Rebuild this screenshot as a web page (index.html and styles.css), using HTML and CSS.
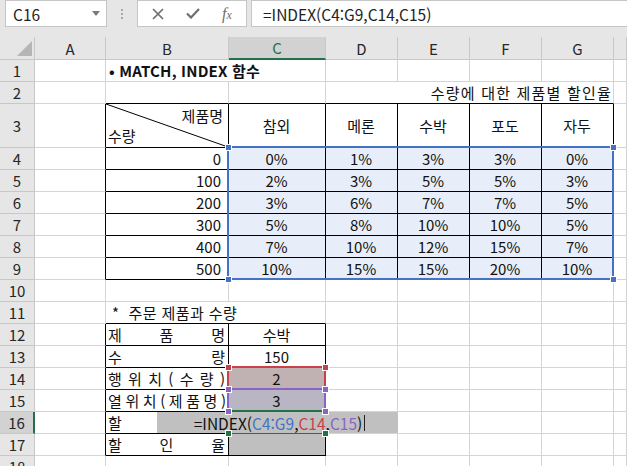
FILE: index.html
```html
<!DOCTYPE html>
<html lang="ko">
<head>
    <meta charset="UTF-8">
    <title>MATCH, INDEX 함수</title>
    <link rel="stylesheet" href="styles.css">
</head>
<body>
    <div class="toolbar">
        <div class="name-box">
            <span>C16</span>
            <svg class="caret" width="8" height="5" viewBox="0 0 8 5"><path d="M0 0h8L4 5z"/></svg>
        </div>
        <div class="grip"><i></i><i></i><i></i></div>
        <div class="fx-buttons">
            <svg width="12" height="12" viewBox="0 0 12 12"><path d="M1 1L11 11M11 1L1 11" stroke="#6e6e6e" stroke-width="1.7" fill="none"/></svg>
            <svg width="14" height="11" viewBox="0 0 14 11"><path d="M1 5.5L5 9.5L13 1" stroke="#6e6e6e" stroke-width="2.2" fill="none"/></svg>
            <span class="fx">f<small>x</small></span>
        </div>
        <div class="formula">=INDEX(C4:G9,C14,C15)</div>
    </div>

    <div class="sheet">
        <!-- column headers -->
        <div class="corner"><span class="tri"></span></div>
        <div class="ch">A</div><div class="ch">B</div><div class="ch sel">C</div><div class="ch">D</div>
        <div class="ch">E</div><div class="ch">F</div><div class="ch">G</div><div class="ch"></div>

        <!-- 1 -->
        <div class="rh">1</div><div class="c"></div>
        <div class="c span2 title">• MATCH, INDEX 함수</div>
        <div class="c"></div><div class="c"></div><div class="c"></div><div class="c"></div><div class="c"></div>

        <!-- 2 -->
        <div class="rh">2</div><div class="c"></div><div class="c kb"></div><div class="c kb"></div>
        <div class="c span4 kb right caption">수량에 대한 제품별 할인율</div>
        <div class="c"></div>

        <!-- 3 -->
        <div class="rh">3</div><div class="c kr"></div>
        <div class="c kr kb diag">
            <svg class="slash" preserveAspectRatio="none" viewBox="0 0 100 100"><line x1="0" y1="0" x2="100" y2="100" stroke="#000" stroke-width="1" vector-effect="non-scaling-stroke"/></svg>
            <span class="top">제품명</span>
            <span class="bottom">수량</span>
        </div>
        <div class="c kr kb mid">참외</div><div class="c kr kb mid">메론</div><div class="c kr kb mid">수박</div>
        <div class="c kr kb mid">포도</div><div class="c kr kb mid">자두</div><div class="c"></div>

        <!-- 4 -->
        <div class="rh">4</div><div class="c kr"></div><div class="c kr kb num">0</div>
        <div class="c kr kb mid ref">0%</div><div class="c kr kb mid ref">1%</div><div class="c kr kb mid ref">3%</div>
        <div class="c kr kb mid ref">3%</div><div class="c kr kb mid ref">0%</div><div class="c"></div>

        <!-- 5 -->
        <div class="rh">5</div><div class="c kr"></div><div class="c kr kb num">100</div>
        <div class="c kr kb mid ref">2%</div><div class="c kr kb mid ref">3%</div><div class="c kr kb mid ref">5%</div>
        <div class="c kr kb mid ref">5%</div><div class="c kr kb mid ref">3%</div><div class="c"></div>

        <!-- 6 -->
        <div class="rh">6</div><div class="c kr"></div><div class="c kr kb num">200</div>
        <div class="c kr kb mid ref">3%</div><div class="c kr kb mid ref">6%</div><div class="c kr kb mid ref">7%</div>
        <div class="c kr kb mid ref">7%</div><div class="c kr kb mid ref">5%</div><div class="c"></div>

        <!-- 7 -->
        <div class="rh">7</div><div class="c kr"></div><div class="c kr kb num">300</div>
        <div class="c kr kb mid ref">5%</div><div class="c kr kb mid ref">8%</div><div class="c kr kb mid ref">10%</div>
        <div class="c kr kb mid ref">10%</div><div class="c kr kb mid ref">5%</div><div class="c"></div>

        <!-- 8 -->
        <div class="rh">8</div><div class="c kr"></div><div class="c kr kb num">400</div>
        <div class="c kr kb mid ref">7%</div><div class="c kr kb mid ref">10%</div><div class="c kr kb mid ref">12%</div>
        <div class="c kr kb mid ref">15%</div><div class="c kr kb mid ref">7%</div><div class="c"></div>

        <!-- 9 -->
        <div class="rh">9</div><div class="c kr"></div><div class="c kr kb num">500</div>
        <div class="c kr kb mid ref">10%</div><div class="c kr kb mid ref">15%</div><div class="c kr kb mid ref">15%</div>
        <div class="c kr kb mid ref">20%</div><div class="c kr kb mid ref">10%</div><div class="c"></div>

        <!-- 10 -->
        <div class="rh">10</div><div class="c"></div><div class="c"></div><div class="c"></div><div class="c"></div>
        <div class="c"></div><div class="c"></div><div class="c"></div><div class="c"></div>

        <!-- 11 -->
        <div class="rh">11</div><div class="c"></div>
        <div class="c span2 kb note">*&nbsp; 주문 제품과 수량</div>
        <div class="c"></div><div class="c"></div><div class="c"></div><div class="c"></div><div class="c"></div>

        <!-- 12 -->
        <div class="rh">12</div><div class="c kr"></div>
        <div class="c kr kb dist"><span>제</span><span>품</span><span>명</span></div>
        <div class="c kr kb mid">수박</div>
        <div class="c"></div><div class="c"></div><div class="c"></div><div class="c"></div><div class="c"></div>

        <!-- 13 -->
        <div class="rh">13</div><div class="c kr"></div>
        <div class="c kr kb dist"><span>수</span><span>량</span></div>
        <div class="c kr kb mid">150</div>
        <div class="c"></div><div class="c"></div><div class="c"></div><div class="c"></div><div class="c"></div>

        <!-- 14 -->
        <div class="rh">14</div><div class="c kr"></div>
        <div class="c kr kb dist"><span>행</span><span>위</span><span>치</span><span>(</span><span>수</span><span>량</span><span>)</span></div>
        <div class="c kr kb mid fill-row">2</div>
        <div class="c"></div><div class="c"></div><div class="c"></div><div class="c"></div><div class="c"></div>

        <!-- 15 -->
        <div class="rh">15</div><div class="c kr"></div>
        <div class="c kr kb dist tight"><span>열</span><span>위</span><span>치</span><span>(</span><span>제</span><span>품</span><span>명</span><span>)</span></div>
        <div class="c kr kb mid fill-col">3</div>
        <div class="c"></div><div class="c"></div><div class="c"></div><div class="c"></div><div class="c"></div>

        <!-- 16 (the rest of the label sits under the editor) -->
        <div class="rh sel">16</div><div class="c kr"></div>
        <div class="c kr kb">할</div>
        <div class="c kr kb fill-grey"></div>
        <div class="c"></div><div class="c"></div><div class="c"></div><div class="c"></div><div class="c"></div>

        <!-- 17 -->
        <div class="rh">17</div><div class="c kr"></div>
        <div class="c kr kb dist"><span>할</span><span>인</span><span>율</span></div>
        <div class="c kr kb fill-grey"></div>
        <div class="c"></div><div class="c"></div><div class="c"></div><div class="c"></div><div class="c"></div>

        <!-- 18 -->
        <div class="rh">18</div><div class="c"></div><div class="c"></div><div class="c"></div><div class="c"></div>
        <div class="c"></div><div class="c"></div><div class="c"></div><div class="c"></div>

        <!-- reference highlights while editing C16 -->
        <div class="range range-blue"></div>
        <div class="range range-red"></div>
        <div class="range range-purple"></div>
        <div class="range range-green"></div>

        <div class="editor">=INDEX(<b class="blue">C4:G9</b>,<b class="red">C14</b>,<b class="purple">C15</b>)<i class="cursor"></i></div>

        <span class="handle blue-h" style="left:225px;top:107px"></span>
        <span class="handle blue-h" style="left:610px;top:107px"></span>
        <span class="handle blue-h" style="left:225px;top:239px"></span>
        <span class="handle blue-h" style="left:610px;top:239px"></span>
        <span class="handle red-h" style="left:225px;top:327px"></span>
        <span class="handle red-h" style="left:322px;top:327px"></span>
        <span class="handle purple-h" style="left:225px;top:349px"></span>
        <span class="handle purple-h" style="left:322px;top:349px"></span>
        <span class="handle purple-h" style="left:225px;top:371px"></span>
        <span class="handle purple-h" style="left:322px;top:371px"></span>
        <span class="handle green-h" style="left:225px;top:393px"></span>
        <span class="handle green-h" style="left:322px;top:393px"></span>
    </div>
</body>
</html>
```

FILE: styles.css
```css
* {
    margin: 0;
    padding: 0;
    box-sizing: border-box;
}

body {
    font-family: 'Noto Sans CJK KR', 'Noto Sans', sans-serif;
    font-size: 15px;
    color: #111;
    background: #fff;
    overflow: hidden;
    width: 627px;
    height: 466px;
}

/* ---------- formula bar ---------- */

.toolbar {
    height: 37px;
    background: #e6e6e6;
    display: flex;
    align-items: flex-start;
}

.name-box,
.fx-buttons,
.formula {
    height: 27px;
    background: #fff;
    border: 1px solid #c6c6c6;
    display: flex;
    align-items: center;
}

.name-box {
    margin-left: 5px;
    width: 102px;
    padding: 0 6px 0 7px;
    justify-content: space-between;
    font-size: 15.5px;
    color: #222;
}

.caret {
    fill: #7a7a7a;
}

.grip {
    width: 30px;
    display: flex;
    flex-direction: column;
    align-items: center;
    gap: 2px;
    padding-top: 9px;
}

.grip i {
    width: 2px;
    height: 2px;
    background: #a9a9a9;
}

.fx-buttons {
    width: 110px;
    padding-left: 14px;
    gap: 22px;
}

.fx {
    font-family: 'Liberation Serif', serif;
    font-style: italic;
    font-size: 16px;
    color: #6e6e6e;
}

.fx small {
    font-size: 12px;
}

.formula {
    flex: 1;
    margin-left: 4px;
    border-right: none;
    padding-left: 11px;
    font-size: 15.5px;
    color: #222;
}

/* ---------- sheet ---------- */

.sheet {
    position: relative;
    display: grid;
    grid-template-columns: 35px 71px 123px 97px 72px 72px 72px 72px 1fr;
    grid-template-rows: 23px 22px 22px 44px repeat(15, 22px);
}

.corner,
.ch,
.rh {
    background: #e6e6e6;
    border-right: 1px solid #c8c8c8;
    border-bottom: 1px solid #c8c8c8;
    display: flex;
    align-items: center;
    justify-content: center;
    color: #262626;
    font-size: 15px;
}

.corner {
    position: relative;
}

.tri {
    position: absolute;
    right: 2px;
    bottom: 3px;
    width: 0;
    height: 0;
    border-left: 15px solid transparent;
    border-bottom: 15px solid #b5b5b5;
}

.ch.sel {
    background: #d2d2d2;
    color: #217346;
    border-bottom: 2px solid #217346;
}

.rh.sel {
    background: #d2d2d2;
    border-right: 2px solid #217346;
}

.c {
    border-right: 1px solid #d4d4d4;
    border-bottom: 1px solid #d4d4d4;
    display: flex;
    align-items: center;
    padding: 0 3px 0 2px;
    white-space: nowrap;
    line-height: 20px;
}

.kr {
    border-right-color: #000;
}

.kb {
    border-bottom-color: #000;
}

.span2 {
    grid-column: span 2;
}

.span4 {
    grid-column: span 4;
}

.title {
    font-weight: bold;
    padding-left: 3px;
    letter-spacing: 0.2px;
}

.caption {
    letter-spacing: 1.2px;
    padding-right: 1px;
}

.note {
    padding-left: 6px;
    letter-spacing: 0.4px;
}

.right {
    justify-content: flex-end;
}

.num {
    justify-content: flex-end;
    padding-right: 7px;
}

.mid {
    justify-content: center;
}

.dist {
    justify-content: space-between;
    padding: 0 3px 0 2px;
}

.dist.tight {
    padding-right: 2px;
}

.diag {
    position: relative;
    flex-direction: column;
    align-items: stretch;
    justify-content: space-between;
    padding: 2px 5px 2px 2px;
}

.diag .slash {
    position: absolute;
    left: 0;
    top: 0;
    width: 100%;
    height: 100%;
}

.diag .top {
    align-self: flex-end;
}

.diag .bottom {
    align-self: flex-start;
}

.ref {
    background: #e7eef9;
}

.fill-row {
    background: #c0b2b2;
}

.fill-col {
    background: #b9b6c4;
}

.fill-grey {
    background: #bfbfbf;
}

/* ---------- reference ranges and in-cell editor ---------- */

.range {
    position: absolute;
    border: 2px solid;
}

.range-blue {
    border-color: #4472c4;
    left: 227px;
    top: 109px;
    width: 387px;
    height: 134px;
}

.range-red {
    border-color: #c8404a;
    left: 227px;
    top: 329px;
    width: 99px;
    height: 24px;
}

.range-purple {
    border-color: #8b62c6;
    left: 227px;
    top: 351px;
    width: 99px;
    height: 24px;
}

.range-green {
    border-color: #217346;
    left: 227px;
    top: 373px;
    width: 99px;
    height: 24px;
}

.editor {
    position: absolute;
    left: 157px;
    top: 375px;
    width: 241px;
    height: 21px;
    background: #c0c0c0;
    display: flex;
    align-items: center;
    justify-content: center;
    padding-left: 4px;
    white-space: nowrap;
    font-size: 15.5px;
}

.editor b {
    font-weight: normal;
}

.blue {
    color: #4472c4;
}

.red {
    color: #c8404a;
}

.purple {
    color: #8b62c6;
}

.cursor {
    width: 1px;
    height: 16px;
    background: #222;
    margin-left: 2px;
}

.handle {
    position: absolute;
    width: 7px;
    height: 7px;
    border: 1px solid #fff;
}

.blue-h {
    background: #4472c4;
}

.red-h {
    background: #c8404a;
}

.purple-h {
    background: #8b62c6;
}

.green-h {
    background: #217346;
}
```
